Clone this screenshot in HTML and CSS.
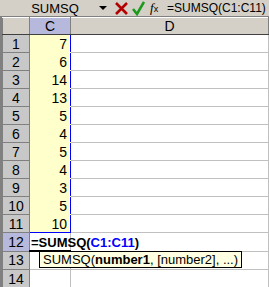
FILE: index.html
```html
<!DOCTYPE html>
<html lang="en">
<head>
    <meta charset="UTF-8">
    <title>SUMSQ</title>
    <link rel="stylesheet" href="styles.css">
</head>
<body>

    <div class="bar">
        <div class="namebox">SUMSQ</div>
        <span class="arrow"></span>
        <svg class="icon" width="15" height="15" viewBox="0 0 15 15">
            <path d="M2 2 L13 13 M13 2 L2 13" stroke="#b00000" stroke-width="2.6" fill="none"/>
        </svg>
        <svg class="icon" width="13" height="15" viewBox="0 0 13 15">
            <path d="M1 8 L5 13 L12 1" stroke="#1c9a1c" stroke-width="2.6" fill="none"/>
        </svg>
        <span class="fx"><i>f</i><small>x</small></span>
        <div class="formula">=SUMSQ(C1:C11)</div>
    </div>

    <div class="sheet">
        <table>
            <colgroup>
                <col class="c-row">
                <col class="c-c">
                <col>
            </colgroup>
            <tr class="head">
                <th class="corner"></th>
                <th class="sel">C</th>
                <th>D</th>
            </tr>
            <tr><th>1</th><td class="rng top">7</td><td></td></tr>
            <tr><th>2</th><td class="rng">6</td><td></td></tr>
            <tr><th>3</th><td class="rng">14</td><td></td></tr>
            <tr><th>4</th><td class="rng">13</td><td></td></tr>
            <tr><th>5</th><td class="rng">5</td><td></td></tr>
            <tr><th>6</th><td class="rng">4</td><td></td></tr>
            <tr><th>7</th><td class="rng">5</td><td></td></tr>
            <tr><th>8</th><td class="rng">4</td><td></td></tr>
            <tr><th>9</th><td class="rng">3</td><td></td></tr>
            <tr><th>10</th><td class="rng">5</td><td></td></tr>
            <tr><th>11</th><td class="rng bottom">10</td><td></td></tr>
            <tr>
                <th class="sel">12</th>
                <td class="active"><span class="edit">=SUMSQ(<span class="ref">C1:C11</span>)</span></td>
                <td></td>
            </tr>
            <tr><th>13</th><td></td><td></td></tr>
            <tr><th>14</th><td></td><td></td></tr>
        </table>
        <div class="tip">SUMSQ(<b>number1</b>, [number2], ...)</div>
    </div>

</body>
</html>
```

FILE: styles.css
```css
body {
    margin: 0;
    font-family: "Liberation Sans", Arial, sans-serif;
    background-color: #fff;
    width: 269px;
    height: 287px;
    overflow: hidden;
}
.bar {
    display: flex;
    align-items: center;
    height: 16px;
    background-color: #d4d0c8;
    border-bottom: 1px solid #808080;
    font-size: 12px;
}
.namebox {
    width: 98px;
    text-align: center;
    padding-left: 12px;
    box-sizing: border-box;
    font-size: 13px;
    color: #000;
}
.arrow {
    width: 0;
    height: 0;
    border-left: 4px solid transparent;
    border-right: 4px solid transparent;
    border-top: 4px solid #000;
    margin: 0 7px 0 1px;
}
.icon {
    margin-right: 3px;
}
.fx {
    width: 14px;
    margin: 0 3px 0 2px;
    font-family: "Liberation Serif", serif;
    font-size: 13px;
    color: #000;
}
.fx small {
    font-size: 9px;
    font-family: "Liberation Sans", sans-serif;
}
.formula {
    white-space: nowrap;
    font-size: 12px;
}
.sheet {
    position: relative;
    border-left: 2px solid #808080;
}
table {
    border-collapse: collapse;
    table-layout: fixed;
    width: 267px;
}
.c-row {
    width: 27px;
}
.c-c {
    width: 41px;
}
th {
    background-color: #c8c8c8;
    border: 1px solid #808080;
    font-weight: normal;
    font-size: 14px;
    height: 17px;
    padding: 0;
    text-align: center;
    color: #000;
}
.head th {
    height: 15px;
    background-color: #d4d0c8;
    border-top: 1px solid #fff;
    border-bottom: 1px solid #404040;
}
th.sel, .head th.sel {
    background-color: #b6b9dc;
}
td {
    border: 1px solid #c0c0c0;
    height: 17px;
    padding: 0 3px;
    font-size: 14px;
    text-align: right;
    white-space: nowrap;
    overflow: visible;
}
td.rng {
    background-color: #ffffcc;
    border-left: 1px solid #0000ff;
    border-right: 1px solid #0000ff;
    border-bottom-color: #ffffcc;
}
td.top {
    border-top: 1px solid #0000ff;
}
td.bottom {
    border-bottom: 1px solid #0000ff;
}
td.active {
    text-align: left;
    padding: 0 1px;
    border-bottom: 2px solid #000;
}
.edit {
    font-weight: bold;
    font-size: 13px;
}
.ref {
    color: #0000ff;
}
.tip {
    position: absolute;
    left: 37px;
    top: 234px;
    height: 15px;
    line-height: 15px;
    padding: 0 3px;
    background-color: #ffffe1;
    border: 1px solid #000;
    font-size: 13px;
    white-space: nowrap;
}
```
